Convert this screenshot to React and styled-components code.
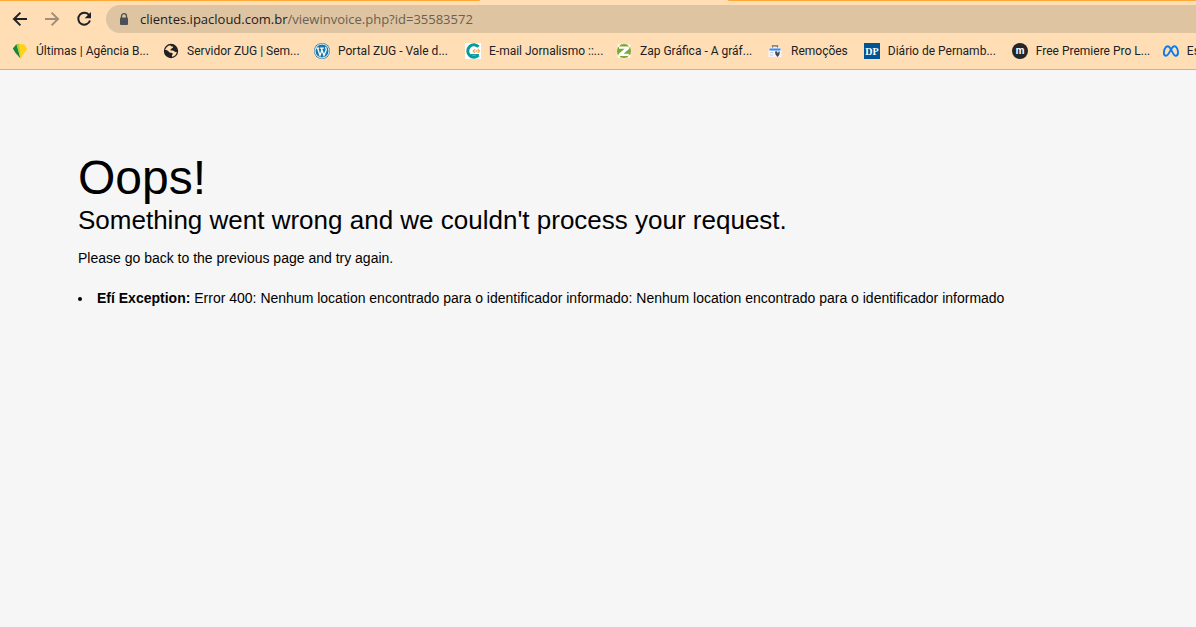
import React from 'react';
import styled, { createGlobalStyle } from 'styled-components';

const bookmarks = [
  { id: 'agencia', name: 'Últimas | Agência B...' },
  { id: 'servidor', name: 'Servidor ZUG | Sem...' },
  { id: 'wordpress', name: 'Portal ZUG - Vale d...' },
  { id: 'email', name: 'E-mail Jornalismo ::...' },
  { id: 'zap', name: 'Zap Gráfica - A gráf...' },
  { id: 'remocoes', name: 'Remoções', short: true },
  { id: 'diario', name: 'Diário de Pernamb...', narrow: true },
  { id: 'premiere', name: 'Free Premiere Pro L...' },
  { id: 'meta', name: 'Es', short: true },
];

const icons = {
  agencia: (
    <>
      <path d="M4.500 1 8.500 15.600 3.500 10 .8 5.600Z" fill="#12883f" />
      <path d="M4.500 1 7.500 .8 8.800 8 8.500 15.600Z" fill="#b5cc2c" />
      <path d="M7 .8 12.500 1.600 15.200 6 8.500 15.600 8 8Z" fill="#ffd21c" />
    </>
  ),
  servidor: (
    <>
      <circle cx="8" cy="8" r="7.200" fill="#202124" />
      <path
        d="M7.4 2.2c.3 1.1 1.3 1.2 2.4 1.2.5 0 .4 1.4-.5 1.7-.8.3-.9 1.3-1.7 1.4-.7.1-.4.9.3 1h1.8c1.1 0 1.5 1.2 2.5 1.4.7.1 1 .2 1.6.1-.4 2.5-2.2 4.4-4.8 4.8-.1-1-.2-1.8.5-2.4.8-.7-.2-1.6-1.3-1.6C6.700 9.800 6 9 5.400 8.200 4.700 7.500 3.500 7.200 2.200 7.100 2.500 4.700 4.600 2.500 7.400 2.200Z"
        fill="#ffdeb6"
      />
    </>
  ),
  wordpress: (
    <>
      <circle cx="8" cy="8" r="8" fill="#1877a8" />
      <circle cx="8" cy="8" r="7" fill="none" stroke="#f5f8fa" strokeWidth="1" />
      <path
        d="M2.200 5.200h3M6.200 5.200h3.600M3.600 5.300 6 12.500l2-5.600M7.300 5.300 10 12.500l2.200-5.500c.4-1.300-.8-1.800-.5-3"
        fill="none"
        stroke="#fff"
        strokeWidth="1.300"
      />
    </>
  ),
  email: (
    <>
      <path d="M0 0h16v16H0z" fill="#fff" />
      <path d="M13.500 3.800A6.200 6.200 0 1 0 13.500 12.200" fill="none" stroke="#079b9b" strokeWidth="3" />
      <path d="M5.500 11.800h8.500" stroke="#079b9b" strokeWidth="1.500" />
      <path d="m9.800 6.200-1.500 1.800 1.500 1.800M12.800 6.200l1.500 1.800-1.500 1.800M10.500 8h1.800" fill="none" stroke="#f5a34a" strokeWidth="1.300" />
    </>
  ),
  zap: (
    <>
      <circle cx="8" cy="8" r="7" fill="#77a936" />
      <path d="M3 3.600h10.300v2.200L7.600 10.800h5.200v2.100H2.800v-2.100l5.800-5H3Z" fill="#fff" />
      <path d="M1.500 1.500h3L2 4.500ZM14.500 1.500h-3L14 4.500ZM1.500 14.500h3L2 11.500ZM14.500 14.500h-3L14 11.500Z" fill="#fff" />
    </>
  ),
  remocoes: (
    <>
      <path d="M5.500 5V2.800h5V5" fill="none" stroke="#687078" strokeWidth="1.200" />
      <path d="M3 4.500h10l1.500 2.500V14h-13V7Z" fill="#f4f5f7" />
      <path d="M2.500 6.500h11" stroke="#3388f4" strokeWidth="2" />
      <path d="M3 9.500h3M3 12h3" stroke="#c3cad3" strokeWidth="1" />
      <path d="m8 8.500.5 3 2 2.500 1.700-2 .7-3-1.200-.8-.8 2.300-1-2.300Z" fill="#41454c" />
    </>
  ),
  diario: (
    <>
      <path d="M0 0h16v16H0z" fill="#005493" />
      <text x="8" y="12" textAnchor="middle" fill="#fff" fontFamily="Liberation Serif, serif" fontSize="10" fontWeight="bold">
        DP
      </text>
    </>
  ),
  premiere: (
    <>
      <circle cx="8" cy="8" r="8" fill="#252628" />
      <text x="8" y="11" textAnchor="middle" fill="#fff" fontFamily="Roboto, sans-serif" fontSize="10" fontWeight="bold">
        m
      </text>
    </>
  ),
  meta: (
    <path
      d="M1 11.300C.5 7.500 2.200 3.200 4.700 3.200c3.300 0 4.900 9.600 8 9.600 1.400 0 2.300-1.200 2.300-3.400 0-3.200-1.600-6.200-3.600-6.200-3.300 0-5.200 9.600-8.200 9.600-1.300 0-2-.5-2.200-1.500Z"
      fill="none"
      stroke="#087bed"
      strokeWidth="1.900"
    />
  ),
};

const App = () => (
  <>
    <GlobalStyle />
    <Browser>
      <TabStrip>
        <InactiveTabs $grow={480} $side="right" />
        <ActiveTab />
        <InactiveTabs $grow={468} $side="left" />
      </TabStrip>
      <Toolbar>
        <NavButton aria-label="Back">
          <NavIcon viewBox="0 0 16 16">
            <path d="M15 8H2.200M8.400 1.600 2 8l6.400 6.400" />
          </NavIcon>
        </NavButton>
        <NavButton aria-label="Forward" disabled>
          <NavIcon viewBox="0 0 16 16">
            <path d="M1 8h12.800M7.600 1.600 14 8l-6.400 6.400" />
          </NavIcon>
        </NavButton>
        <NavButton aria-label="Reload">
          <NavIcon viewBox="0 0 16 16">
            <path d="M13.200 4.200A6 6 0 1 0 14 9.500" />
            <path d="M15 1v6.300H8.700Z" fill="currentColor" stroke="none" />
          </NavIcon>
        </NavButton>
        <AddressBar>
          <LockIcon viewBox="0 0 10 12">
            <path d="M2.500 5V3.200a2.500 2.500 0 0 1 5 0V5" fill="none" stroke="#4d5156" strokeWidth="1.300" />
            <rect x="1" y="4.500" width="8" height="7.500" rx="1" fill="#4d5156" />
          </LockIcon>
          <Url>
            clientes.ipacloud.com.br<UrlPath>/viewinvoice.php?id=35583572</UrlPath>
          </Url>
        </AddressBar>
      </Toolbar>
      <BookmarkBar aria-label="Bookmarks">
        {bookmarks.map(({ id, name, short, narrow }) => (
          <Bookmark key={id} href="#">
            <Favicon viewBox="0 0 16 16">{icons[id]}</Favicon>
            <BookmarkName $short={short} $narrow={narrow}>
              {name}
            </BookmarkName>
          </Bookmark>
        ))}
      </BookmarkBar>
    </Browser>
    <ErrorPage>
      <Title>Oops!</Title>
      <Subtitle>Something went wrong and we couldn't process your request.</Subtitle>
      <Message>Please go back to the previous page and try again.</Message>
      <ErrorList>
        <li>
          <strong>Efí Exception:</strong> Error 400: Nenhum location encontrado para o identificador informado: Nenhum
          location encontrado para o identificador informado
        </li>
      </ErrorList>
    </ErrorPage>
  </>
);

const GlobalStyle = createGlobalStyle`
  * {
    box-sizing: border-box;
  }

  body {
    margin: 0;
    background-color: #f6f6f6;
    overflow-x: hidden;
  }
`;

const Browser = styled.header`
  background-color: #ffdeb6;
  border-bottom: 1px solid #cdb292;
  font-family: Roboto, 'Open Sans', sans-serif;
  color: #202124;
  overflow: hidden;
`;

const TabStrip = styled.div`
  display: flex;
  height: 5px;
`;

const InactiveTabs = styled.div`
  flex: ${(props) => props.$grow} 1 0;
  height: 1px;
  background-color: #ffa938;
  border-bottom-${(props) => props.$side}-radius: 1px;
`;

const ActiveTab = styled.div`
  flex: 248 1 0;
`;

const Toolbar = styled.div`
  display: flex;
  align-items: center;
  gap: 4px;
  padding-left: 6px;
`;

const NavButton = styled.button`
  display: grid;
  place-items: center;
  width: 28px;
  height: 28px;
  padding: 0;
  border: 0;
  background: none;
  color: #202124;

  &:disabled {
    color: #a08e7b;
  }
`;

const NavIcon = styled.svg`
  width: 16px;
  height: 16px;
  fill: none;
  stroke: currentColor;
  stroke-width: 2;
`;

const AddressBar = styled.div`
  flex: 1;
  display: flex;
  align-items: center;
  gap: 11px;
  height: 28px;
  margin-left: 4px;
  padding-left: 13px;
  background-color: #dfc4a1;
  border-radius: 14px 0 0 14px;
`;

const LockIcon = styled.svg`
  width: 10px;
  height: 12px;
`;

const Url = styled.span`
  font-family: 'Open Sans', sans-serif;
  font-size: 13px;
  line-height: 20px;
  white-space: nowrap;
`;

const UrlPath = styled.span`
  color: #6a5f53;
`;

const BookmarkBar = styled.nav`
  display: flex;
  align-items: center;
  gap: 16px;
  height: 36px;
  padding-left: 12px;
`;

const Bookmark = styled.a`
  flex: none;
  display: flex;
  align-items: center;
  gap: 8px;
  color: inherit;
  text-decoration: none;
`;

const Favicon = styled.svg`
  flex: none;
  width: 16px;
  height: 16px;
`;

const BookmarkName = styled.span`
  width: ${(props) => (props.$short ? 'auto' : props.$narrow ? '108px' : '111px')};
  font-size: 12px;
  line-height: 16px;
  white-space: nowrap;
`;

const ErrorPage = styled.main`
  padding: 80px 78px;
  font-family: 'Liberation Sans', Arial, sans-serif;
  font-size: 14px;
  line-height: 20px;
  color: #000;
`;

const Title = styled.h1`
  margin: 0;
  font-size: 48px;
  font-weight: 400;
  line-height: 56px;
`;

const Subtitle = styled.h2`
  margin: 0;
  font-size: 26px;
  font-weight: 400;
  line-height: 28px;
`;

const Message = styled.p`
  margin: 14px 0 20px;
`;

const ErrorList = styled.ul`
  margin: 0;
  padding: 0;
  list-style-position: inside;
`;

export default App;
